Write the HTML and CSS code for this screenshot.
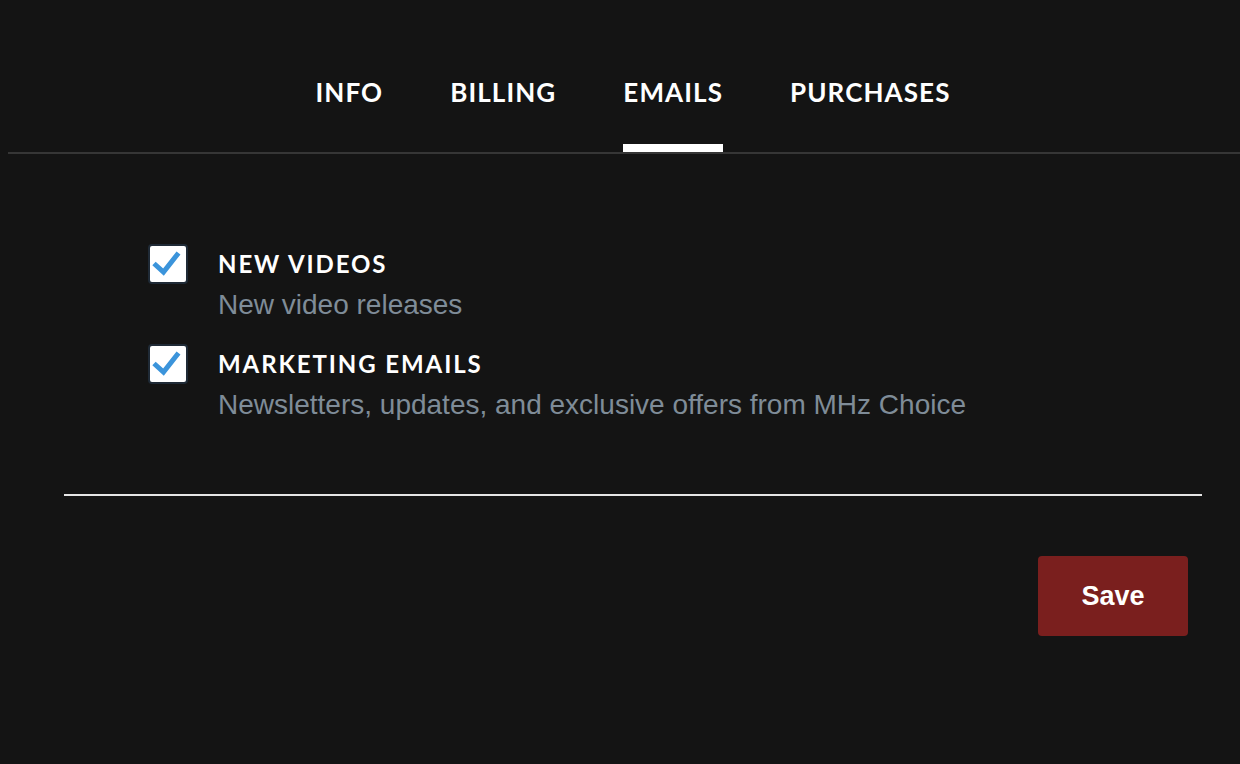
FILE: index.html
```html
<!DOCTYPE html>
<html lang="en">
<head>
<meta charset="utf-8">
<title>Account - Emails</title>
<link rel="stylesheet" href="styles.css">
</head>
<body>
  <nav class="tabs">
    <a class="tab" href="#">INFO</a>
    <a class="tab" href="#">BILLING</a>
    <a class="tab active" href="#">EMAILS</a>
    <a class="tab" href="#">PURCHASES</a>
  </nav>
  <main class="content">
    <div class="options">
      <label class="option">
        <span class="box">
          <svg viewBox="0 0 36 36" width="36" height="36" aria-hidden="true"><path d="M4 17.5l9.5 8.5L28.5 7" fill="none" stroke="#3b94db" stroke-width="5" stroke-linecap="butt" stroke-linejoin="miter"/></svg>
        </span>
        <span class="text">
          <span class="title">NEW VIDEOS</span>
          <span class="desc">New video releases</span>
        </span>
      </label>
      <label class="option">
        <span class="box">
          <svg viewBox="0 0 36 36" width="36" height="36" aria-hidden="true"><path d="M4 17.5l9.5 8.5L28.5 7" fill="none" stroke="#3b94db" stroke-width="5" stroke-linecap="butt" stroke-linejoin="miter"/></svg>
        </span>
        <span class="text">
          <span class="title">MARKETING EMAILS</span>
          <span class="desc">Newsletters, updates, and exclusive offers from MHz Choice</span>
        </span>
      </label>
    </div>
    <hr class="divider">
    <div class="actions">
      <button class="save" type="button">Save</button>
    </div>
  </main>
</body>
</html>
```

FILE: styles.css
```css
html, body {
  margin: 0;
  padding: 0;
  background: #141414;
}

body {
  color: #ffffff;
  font-family: "Lato", "Liberation Sans", sans-serif;
}

.tabs {
  margin-left: 8px;
  padding-top: 77px;
  padding-left: 18px;
  display: flex;
  justify-content: center;
  gap: 67px;
  border-bottom: 2px solid #363636;
}

.tab {
  display: block;
  color: #ffffff;
  text-decoration: none;
  font-family: "Lato", sans-serif;
  font-weight: 700;
  font-size: 26px;
  line-height: 31px;
  letter-spacing: 1.1px;
  padding-bottom: 36px;
  border-bottom: 8px solid transparent;
}

.tab.active {
  border-bottom-color: #ffffff;
}

.content {
  padding: 95px 38px 0 64px;
}

.options {
  padding-left: 84px;
  display: flex;
  flex-direction: column;
  gap: 28px;
}

.option {
  display: flex;
  align-items: flex-start;
  gap: 30px;
}

.box {
  flex: none;
  width: 36px;
  height: 36px;
  margin-top: -5px;
  background: #ffffff;
  border: 2px solid #1f2a36;
  border-radius: 4px;
  display: flex;
  align-items: center;
  justify-content: center;
}

.box svg {
  display: block;
}

.text {
  display: flex;
  flex-direction: column;
  gap: 10px;
}

.title {
  font-family: "Lato", sans-serif;
  font-weight: 700;
  font-size: 24px;
  line-height: 30px;
  letter-spacing: 1.9px;
  color: #ffffff;
}

.desc {
  font-family: "Liberation Sans", Arial, sans-serif;
  font-size: 28px;
  line-height: 32px;
  color: #7f8c98;
}

.divider {
  margin: 73px 0 0 0;
  border: 0;
  height: 2px;
  background: #e6e6e6;
}

.actions {
  display: flex;
  justify-content: flex-end;
  padding: 60px 14px 0 0;
}

.save {
  width: 150px;
  height: 80px;
  border: 0;
  border-radius: 4px;
  background: #7a1f1e;
  color: #ffffff;
  font-family: "Liberation Sans", Arial, sans-serif;
  font-weight: 700;
  font-size: 27px;
  cursor: pointer;
}
```
